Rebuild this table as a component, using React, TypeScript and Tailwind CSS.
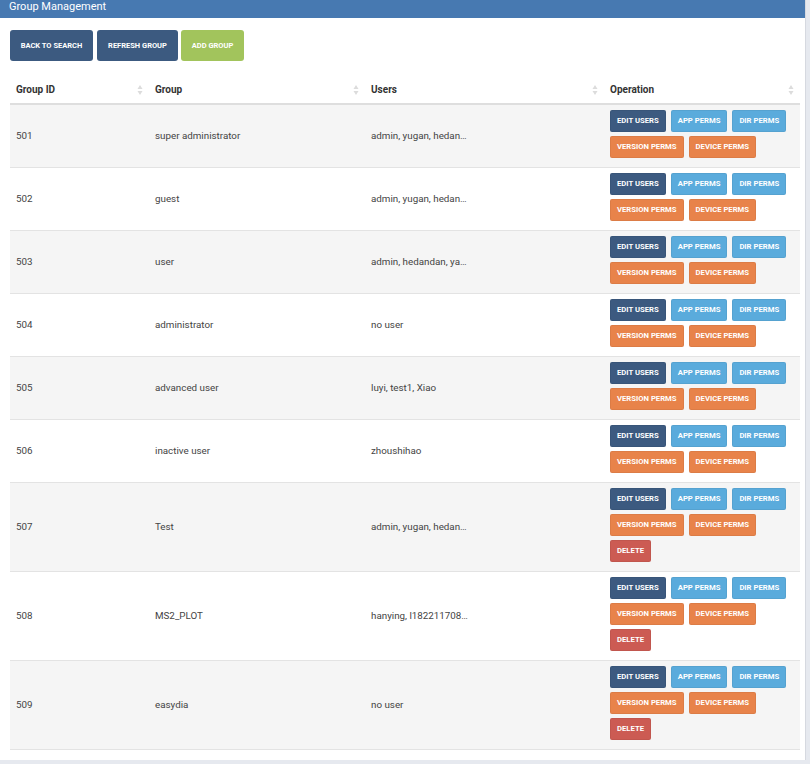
import React from "react";

type Row = { id: string; group: string; users: string; del?: boolean };

const rows: Row[] = [
  { id: "501", group: "super administrator", users: "admin, yugan, hedan…" },
  { id: "502", group: "guest", users: "admin, yugan, hedan…" },
  { id: "503", group: "user", users: "admin, hedandan, ya…" },
  { id: "504", group: "administrator", users: "no user" },
  { id: "505", group: "advanced user", users: "luyi, test1, Xiao" },
  { id: "506", group: "inactive user", users: "zhoushihao" },
  { id: "507", group: "Test", users: "admin, yugan, hedan…", del: true },
  { id: "508", group: "MS2_PLOT", users: "hanying, l182211708…", del: true },
  { id: "509", group: "easydia", users: "no user", del: true },
];

function SortIcon() {
  return (
    <svg width="6" height="12" viewBox="0 0 6 12" className="shrink-0">
      <path d="M3 1 L5.5 5 L0.5 5 Z" fill="#dcdcdc" />
      <path d="M3 11 L5.5 7 L0.5 7 Z" fill="#dcdcdc" />
    </svg>
  );
}

function Btn({ color, children }: { color: string; children: React.ReactNode }) {
  return (
    <button
      className={`${color} h-[22px] px-[6px] mr-[5px] mb-[4px] rounded-[2px] text-white font-bold text-[7.7px] leading-none uppercase border border-black/5`}
    >
      {children}
    </button>
  );
}

function Th({ children, w }: { children: React.ReactNode; w: string }) {
  return (
    <th className={`${w} text-left font-bold text-[10px] text-[#333] pl-[6px] pr-[6px] h-[28px] border-b-2 border-[#dedede]`}>
      <div className="flex items-center justify-between">
        <span>{children}</span>
        <SortIcon />
      </div>
    </th>
  );
}

export default function App() {
  return (
    <div
      className="w-[810px] h-[764px] bg-[#e6e9ef] overflow-hidden"
      style={{ fontFamily: "Roboto, 'Noto Sans', sans-serif" }}
    >
      <div className="w-[806px] h-[760px] bg-white border-r border-[#d6d9e0]">
        <div className="h-[18px] bg-[#4779b1] text-white text-[11px] leading-[14px] pl-[9px]">
          Group Management
        </div>
        <div className="flex pl-[10px] pt-[12px]">
          <button className="h-[31px] w-[83px] mr-[4px] rounded-[3px] bg-[#3c5a80] text-white text-[7.5px] font-bold uppercase">
            Back to search
          </button>
          <button className="h-[31px] w-[81px] mr-[3px] rounded-[3px] bg-[#3c5a80] text-white text-[7.5px] font-bold uppercase">
            Refresh group
          </button>
          <button className="h-[31px] w-[63px] rounded-[3px] bg-[#a2c45c] text-white text-[7.5px] font-bold uppercase">
            Add group
          </button>
        </div>
        <div className="pl-[10px] pt-[15px]">
          <table className="w-[790px] border-collapse table-fixed">
            <thead>
              <tr>
                <Th w="w-[139px]">Group ID</Th>
                <Th w="w-[216px]">Group</Th>
                <Th w="w-[239px]">Users</Th>
                <Th w="w-[196px]">Operation</Th>
              </tr>
            </thead>
            <tbody>
              {rows.map((r, i) => (
                <tr
                  key={r.id}
                  className={`${i % 2 === 0 ? "bg-[#f5f5f5]" : "bg-white"} border-b border-[#e3e3e3] text-[9.8px] text-[#444]`}
                >
                  <td className="pl-[6px] align-middle">{r.id}</td>
                  <td className="pl-[6px] align-middle">{r.group}</td>
                  <td className="pl-[6px] align-middle">{r.users}</td>
                  <td className="pl-[6px] pt-[5px] pb-[5px] align-middle">
                    <div className="flex flex-wrap w-[190px]">
                      <Btn color="bg-[#3c5a80]">Edit users</Btn>
                      <Btn color="bg-[#5aabdc]">App perms</Btn>
                      <Btn color="bg-[#5aabdc]">Dir perms</Btn>
                      <Btn color="bg-[#e8834a]">Version perms</Btn>
                      <Btn color="bg-[#e8834a]">Device perms</Btn>
                      {r.del && <Btn color="bg-[#cc5b53]">Delete</Btn>}
                    </div>
                  </td>
                </tr>
              ))}
            </tbody>
          </table>
        </div>
      </div>
    </div>
  );
}
